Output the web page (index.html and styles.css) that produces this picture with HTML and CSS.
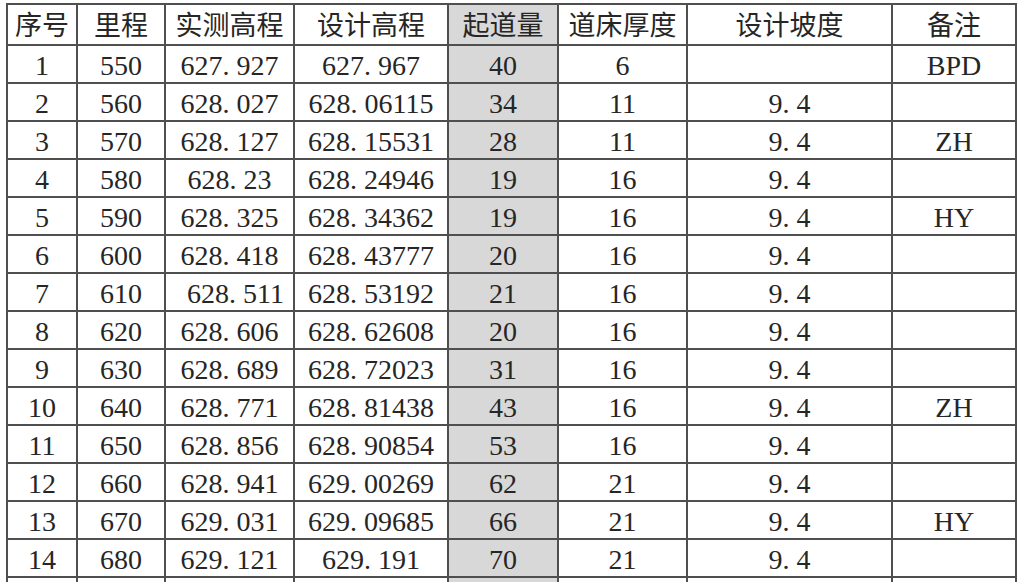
FILE: index.html
```html
<!DOCTYPE html>
<html lang="zh-CN">
<head>
<meta charset="utf-8">
<title>起道量计算表</title>
<link rel="stylesheet" href="styles.css">
</head>
<body>
<table class="sheet">
  <colgroup>
    <col class="c1"><col class="c2"><col class="c3"><col class="c4"><col class="c5"><col class="c6"><col class="c7"><col class="c8">
  </colgroup>
  <thead>
    <tr><th>序号</th><th>里程</th><th>实测高程</th><th>设计高程</th><th class="hl">起道量</th><th>道床厚度</th><th>设计坡度</th><th>备注</th></tr>
  </thead>
  <tbody>
    <tr><td>1</td><td>550</td><td>627<span class="d">.</span>927</td><td>627<span class="d">.</span>967</td><td class="hl">40</td><td>6</td><td></td><td>BPD</td></tr>
    <tr><td>2</td><td>560</td><td>628<span class="d">.</span>027</td><td>628<span class="d">.</span>06115</td><td class="hl">34</td><td>11</td><td>9<span class="d">.</span>4</td><td></td></tr>
    <tr><td>3</td><td>570</td><td>628<span class="d">.</span>127</td><td>628<span class="d">.</span>15531</td><td class="hl">28</td><td>11</td><td>9<span class="d">.</span>4</td><td>ZH</td></tr>
    <tr><td>4</td><td>580</td><td>628<span class="d">.</span>23</td><td>628<span class="d">.</span>24946</td><td class="hl">19</td><td>16</td><td>9<span class="d">.</span>4</td><td></td></tr>
    <tr><td>5</td><td>590</td><td>628<span class="d">.</span>325</td><td>628<span class="d">.</span>34362</td><td class="hl">19</td><td>16</td><td>9<span class="d">.</span>4</td><td>HY</td></tr>
    <tr><td>6</td><td>600</td><td>628<span class="d">.</span>418</td><td>628<span class="d">.</span>43777</td><td class="hl">20</td><td>16</td><td>9<span class="d">.</span>4</td><td></td></tr>
    <tr><td>7</td><td>610</td><td class="shift">628<span class="d">.</span>511</td><td>628<span class="d">.</span>53192</td><td class="hl">21</td><td>16</td><td>9<span class="d">.</span>4</td><td></td></tr>
    <tr><td>8</td><td>620</td><td>628<span class="d">.</span>606</td><td>628<span class="d">.</span>62608</td><td class="hl">20</td><td>16</td><td>9<span class="d">.</span>4</td><td></td></tr>
    <tr><td>9</td><td>630</td><td>628<span class="d">.</span>689</td><td>628<span class="d">.</span>72023</td><td class="hl">31</td><td>16</td><td>9<span class="d">.</span>4</td><td></td></tr>
    <tr><td>10</td><td>640</td><td>628<span class="d">.</span>771</td><td>628<span class="d">.</span>81438</td><td class="hl">43</td><td>16</td><td>9<span class="d">.</span>4</td><td>ZH</td></tr>
    <tr><td>11</td><td>650</td><td>628<span class="d">.</span>856</td><td>628<span class="d">.</span>90854</td><td class="hl">53</td><td>16</td><td>9<span class="d">.</span>4</td><td></td></tr>
    <tr><td>12</td><td>660</td><td>628<span class="d">.</span>941</td><td>629<span class="d">.</span>00269</td><td class="hl">62</td><td>21</td><td>9<span class="d">.</span>4</td><td></td></tr>
    <tr><td>13</td><td>670</td><td>629<span class="d">.</span>031</td><td>629<span class="d">.</span>09685</td><td class="hl">66</td><td>21</td><td>9<span class="d">.</span>4</td><td>HY</td></tr>
    <tr><td>14</td><td>680</td><td>629<span class="d">.</span>121</td><td>629<span class="d">.</span>191</td><td class="hl">70</td><td>21</td><td>9<span class="d">.</span>4</td><td></td></tr>
    <tr class="tail"><td></td><td></td><td></td><td></td><td class="hl"></td><td></td><td></td><td></td></tr>
  </tbody>
</table>
</body>
</html>
```

FILE: styles.css
```css
html, body {
  margin: 0;
  padding: 0;
  background: #ffffff;
  overflow: hidden;
}

body {
  padding: 3px 0 0 6px;
  height: 579px;
}

.sheet {
  border-collapse: separate;
  border-spacing: 0;
  table-layout: fixed;
  width: 1011px;
  border-top: 2px solid #4f4f4f;
  border-left: 2px solid #4f4f4f;
  color: #262626;
  font-family: "Liberation Serif", "Noto Sans CJK SC", serif;
  font-size: 28px;
}

.c1 { width: 70px; }
.c2 { width: 88px; }
.c3 { width: 129px; }
.c4 { width: 154px; }
.c5 { width: 110px; }
.c6 { width: 129px; }
.c7 { width: 205px; }
.c8 { width: 124px; }

.sheet th,
.sheet td {
  border-right: 2px solid #4f4f4f;
  border-bottom: 2px solid #4f4f4f;
  padding: 0;
  text-align: center;
  vertical-align: middle;
  white-space: nowrap;
  overflow: hidden;
}

.sheet th {
  height: 37px;
  font-family: "Noto Sans CJK SC", sans-serif;
  font-size: 27px;
  font-weight: 400;
  line-height: 30px;
  padding-bottom: 2px;
}

.sheet td {
  line-height: 30px;
  padding-top: 3px;
  box-sizing: border-box;
}

.sheet tbody tr td {
  height: 38px;
}

.hl {
  background: #d8d8d8;
}

.d {
  display: inline-block;
  width: 14px;
  text-align: left;
}

.shift {
  padding-left: 12px !important;
}

.sheet tbody tr.tail td {
  height: 4px;
  line-height: 0;
  padding: 0;
  border-bottom: 0;
}
```
